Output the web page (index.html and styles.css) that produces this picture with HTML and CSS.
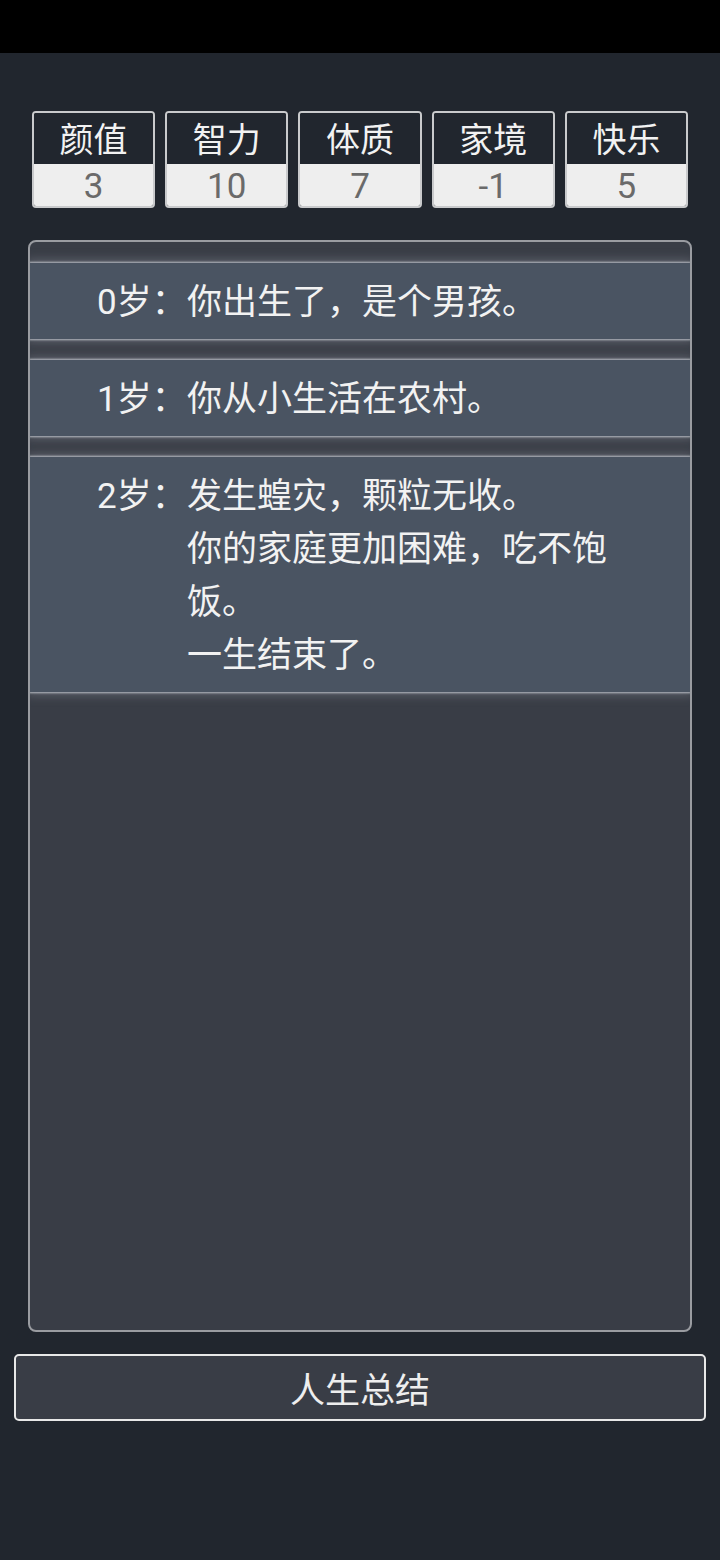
FILE: index.html
```html
<!DOCTYPE html>
<html lang="zh-CN">
<head>
<meta charset="utf-8">
<title>人生重开</title>
<link rel="stylesheet" href="styles.css">
</head>
<body>
<div class="status-bar"></div>
<main class="page">
  <section class="stats">
    <div class="stat"><div class="stat-label">颜值</div><div class="stat-value">3</div></div>
    <div class="stat"><div class="stat-label">智力</div><div class="stat-value">10</div></div>
    <div class="stat"><div class="stat-label">体质</div><div class="stat-value">7</div></div>
    <div class="stat"><div class="stat-label">家境</div><div class="stat-value">-1</div></div>
    <div class="stat"><div class="stat-label">快乐</div><div class="stat-value">5</div></div>
  </section>
  <section class="timeline">
    <div class="event"><span class="age">0岁：</span><span class="desc">你出生了，是个男孩。</span></div>
    <div class="event"><span class="age">1岁：</span><span class="desc">你从小生活在农村。</span></div>
    <div class="event"><span class="age">2岁：</span><span class="desc">发生蝗灾，颗粒无收。<br>你的家庭更加困难，吃不饱饭。<br>一生结束了。</span></div>
  </section>
  <button class="summary">人生总结</button>
</main>
</body>
</html>
```

FILE: styles.css
```css
* { box-sizing: border-box; }
html, body {
  margin: 0;
  padding: 0;
  background: #21262e;
  font-family: Roboto, "Noto Sans CJK SC", sans-serif;
  color: #eeeeee;
}
.status-bar {
  height: 53px;
  background: #000;
}
.page {
  display: flex;
  flex-direction: column;
  padding: 58px 0 0;
}
.stats {
  display: grid;
  grid-template-columns: repeat(5, 1fr);
  gap: 10px;
  padding: 0 32px;
}
.stat {
  border: 2px solid #c9cacc;
  border-radius: 4px;
  overflow: hidden;
  display: flex;
  flex-direction: column;
}
.stat-label {
  height: 51px;
  background: #21262e;
  color: #f2f2f2;
  font-size: 34px;
  line-height: 54px;
  text-align: center;
}
.stat-value {
  height: 42px;
  background: #eeeeee;
  color: #6a6a6a;
  font-size: 35px;
  line-height: 45px;
  text-align: center;
}
.timeline {
  margin: 32px 28px 0;
  height: 1092px;
  border: 2px solid #9a9ca1;
  border-radius: 8px;
  background: #393d46;
  padding-top: 21px;
  display: flex;
  flex-direction: column;
  gap: 21px;
  overflow: hidden;
}
.event {
  display: flex;
  background: #4a5462;
  padding: 13px 66px 10px 67px;
  font-size: 35px;
  line-height: 53px;
  color: #f2f2f2;
  box-shadow: 0 0 2px 1px rgba(200, 204, 212, 0.85), 0 0 10px 3px rgba(140, 145, 155, 0.45);
}
.age {
  flex-shrink: 0;
  width: 90px;
}
.desc {
  flex: 1;
}
.summary {
  margin: 22px 14px 0;
  height: 67px;
  border: 2px solid #e8e8e8;
  border-radius: 5px;
  background: #393d46;
  color: #eeeeee;
  font-family: Roboto, "Noto Sans CJK SC", sans-serif;
  font-size: 35px;
  padding: 0;
}
```
